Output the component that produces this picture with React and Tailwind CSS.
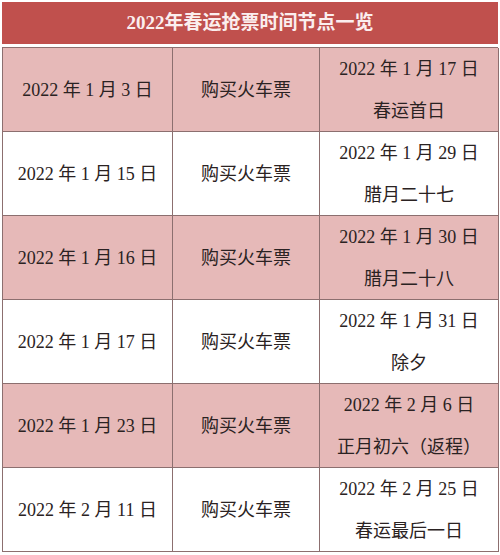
import React from "react";

const rows = [
  { date: "2022 年 1 月 3 日", action: "购买火车票", target: "2022 年 1 月 17 日", note: "春运首日" },
  { date: "2022 年 1 月 15 日", action: "购买火车票", target: "2022 年 1 月 29 日", note: "腊月二十七" },
  { date: "2022 年 1 月 16 日", action: "购买火车票", target: "2022 年 1 月 30 日", note: "腊月二十八" },
  { date: "2022 年 1 月 17 日", action: "购买火车票", target: "2022 年 1 月 31 日", note: "除夕" },
  { date: "2022 年 1 月 23 日", action: "购买火车票", target: "2022 年 2 月 6 日", note: "正月初六（返程）" },
  { date: "2022 年 2 月 11 日", action: "购买火车票", target: "2022 年 2 月 25 日", note: "春运最后一日" },
];

const App = () => {
  return (
    <div
      className="w-[500px] h-[555px] bg-white pt-[2px] pl-[2px] text-[#2a2222]"
      style={{ fontFamily: '"Liberation Serif", "Noto Sans CJK SC", serif' }}
    >
      {/* Title bar */}
      <div className="w-[496px] h-[42px] bg-[#c0504d] flex items-center justify-center text-[19px] font-bold text-[#fbeeee]">
        2022年春运抢票时间节点一览
      </div>

      {/* Table */}
      <div className="mt-[3px] w-[496px] border-l border-t border-[#8c6f6f]">
        {rows.map((row, i) => (
          <div
            key={i}
            className={
              "grid grid-cols-[170px_147px_179px] h-[84px] border-b border-[#8c6f6f] text-[18px] " +
              (i % 2 === 0 ? "bg-[#e6b9b8]" : "bg-white")
            }
          >
            <div className="flex items-center justify-center border-r border-[#8c6f6f]">
              {row.date}
            </div>
            <div className="flex items-center justify-center border-r border-[#8c6f6f]">
              {row.action}
            </div>
            <div className="flex flex-col items-center justify-center border-r border-[#8c6f6f] leading-[42px]">
              <span>{row.target}</span>
              <span>{row.note}</span>
            </div>
          </div>
        ))}
      </div>
    </div>
  );
};

export default App;
